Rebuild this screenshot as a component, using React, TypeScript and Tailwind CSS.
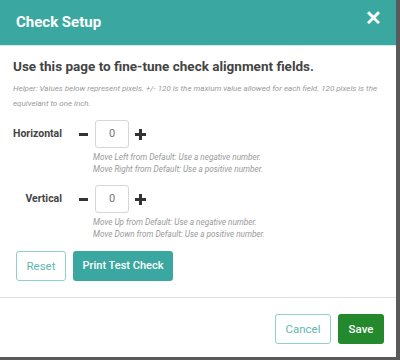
import { useState } from 'react';

function Stepper({ label }: { label: string }) {
  const [value, setValue] = useState(0);
  return (
    <div className="flex items-center">
      <span className="w-[62px] text-right text-[10.5px] font-bold text-[#444]">{label}</span>
      <button className="ml-[15px] flex h-[12px] w-[12px] items-center justify-center" onClick={() => setValue(value - 1)}>
        <span className="h-[3px] w-[9px] bg-[#333]" />
      </button>
      <div className="ml-[6px] flex h-[28px] w-[34px] items-center justify-center rounded-[3px] border border-[#d6d6d6] text-[11px] text-[#777]">
        {value}
      </div>
      <button className="relative ml-[6px] h-[11px] w-[11px]" onClick={() => setValue(value + 1)}>
        <span className="absolute left-0 top-[4px] h-[3px] w-[11px] bg-[#333]" />
        <span className="absolute left-[4px] top-0 h-[11px] w-[3px] bg-[#333]" />
      </button>
    </div>
  );
}

function Hint({ lines }: { lines: string[] }) {
  return (
    <div className="ml-[93px] mt-[3px] text-[8.2px] italic leading-[12px] text-[#999]">
      {lines.map((l) => (
        <p key={l}>{l}</p>
      ))}
    </div>
  );
}

export default function App() {
  return (
    <div className="h-[360px] w-[400px] bg-[#5a5a5a] font-['Roboto',sans-serif]">
      <div className="flex h-[357px] w-[396px] flex-col bg-white">
        <div className="flex h-[46px] items-center justify-between border-b border-[#cdebe8] bg-[#3aa8a0] pl-[16px] pr-[14px]">
          <h1 className="text-[15px] font-bold text-white">Check Setup</h1>
          <span className="-mt-[10px] text-[20px] font-bold leading-none text-white">✕</span>
        </div>
        <div className="px-[13px] pt-[10px]">
          <h2 className="text-[13.5px] font-bold text-[#444]">Use this page to fine-tune check alignment fields.</h2>
          <p className="mt-[5px] text-[8px] italic leading-[15px] text-[#9a9a9a]">
            Helper: Values below represent pixels. +/- 120 is the maxium value allowed for each field. 120 pixels is the equivelant to one inch.
          </p>
        </div>
        <div className="mt-[9px]">
          <Stepper label="Horizontal" />
          <Hint lines={['Move Left from Default: Use a negative number.', 'Move Right from Default: Use a positive number.']} />
          <div className="mt-[10px]">
            <Stepper label="Vertical" />
          </div>
          <Hint lines={['Move Up from Default: Use a negative number.', 'Move Down from Default: Use a positive number.']} />
        </div>
        <div className="mt-[11px] flex gap-[7px] px-[16px]">
          <button className="h-[30px] w-[50px] rounded-[3px] border border-[#8fd0cb] text-[11.5px] text-[#5fb8b1]">Reset</button>
          <button className="h-[30px] w-[100px] rounded-[3px] bg-[#3aa8a0] text-[11px] font-medium text-white">Print Test Check</button>
        </div>
        <div className="mt-[16px] border-t border-[#e2e2e2]" />
        <div className="flex justify-end gap-[7px] px-[12px] pt-[16px]">
          <button className="h-[30px] w-[56px] rounded-[3px] border border-[#8fd0cb] text-[11.5px] text-[#5fb8b1]">Cancel</button>
          <button className="h-[30px] w-[46px] rounded-[3px] bg-[#24892d] text-[11.5px] font-medium text-white">Save</button>
        </div>
      </div>
    </div>
  );
}
